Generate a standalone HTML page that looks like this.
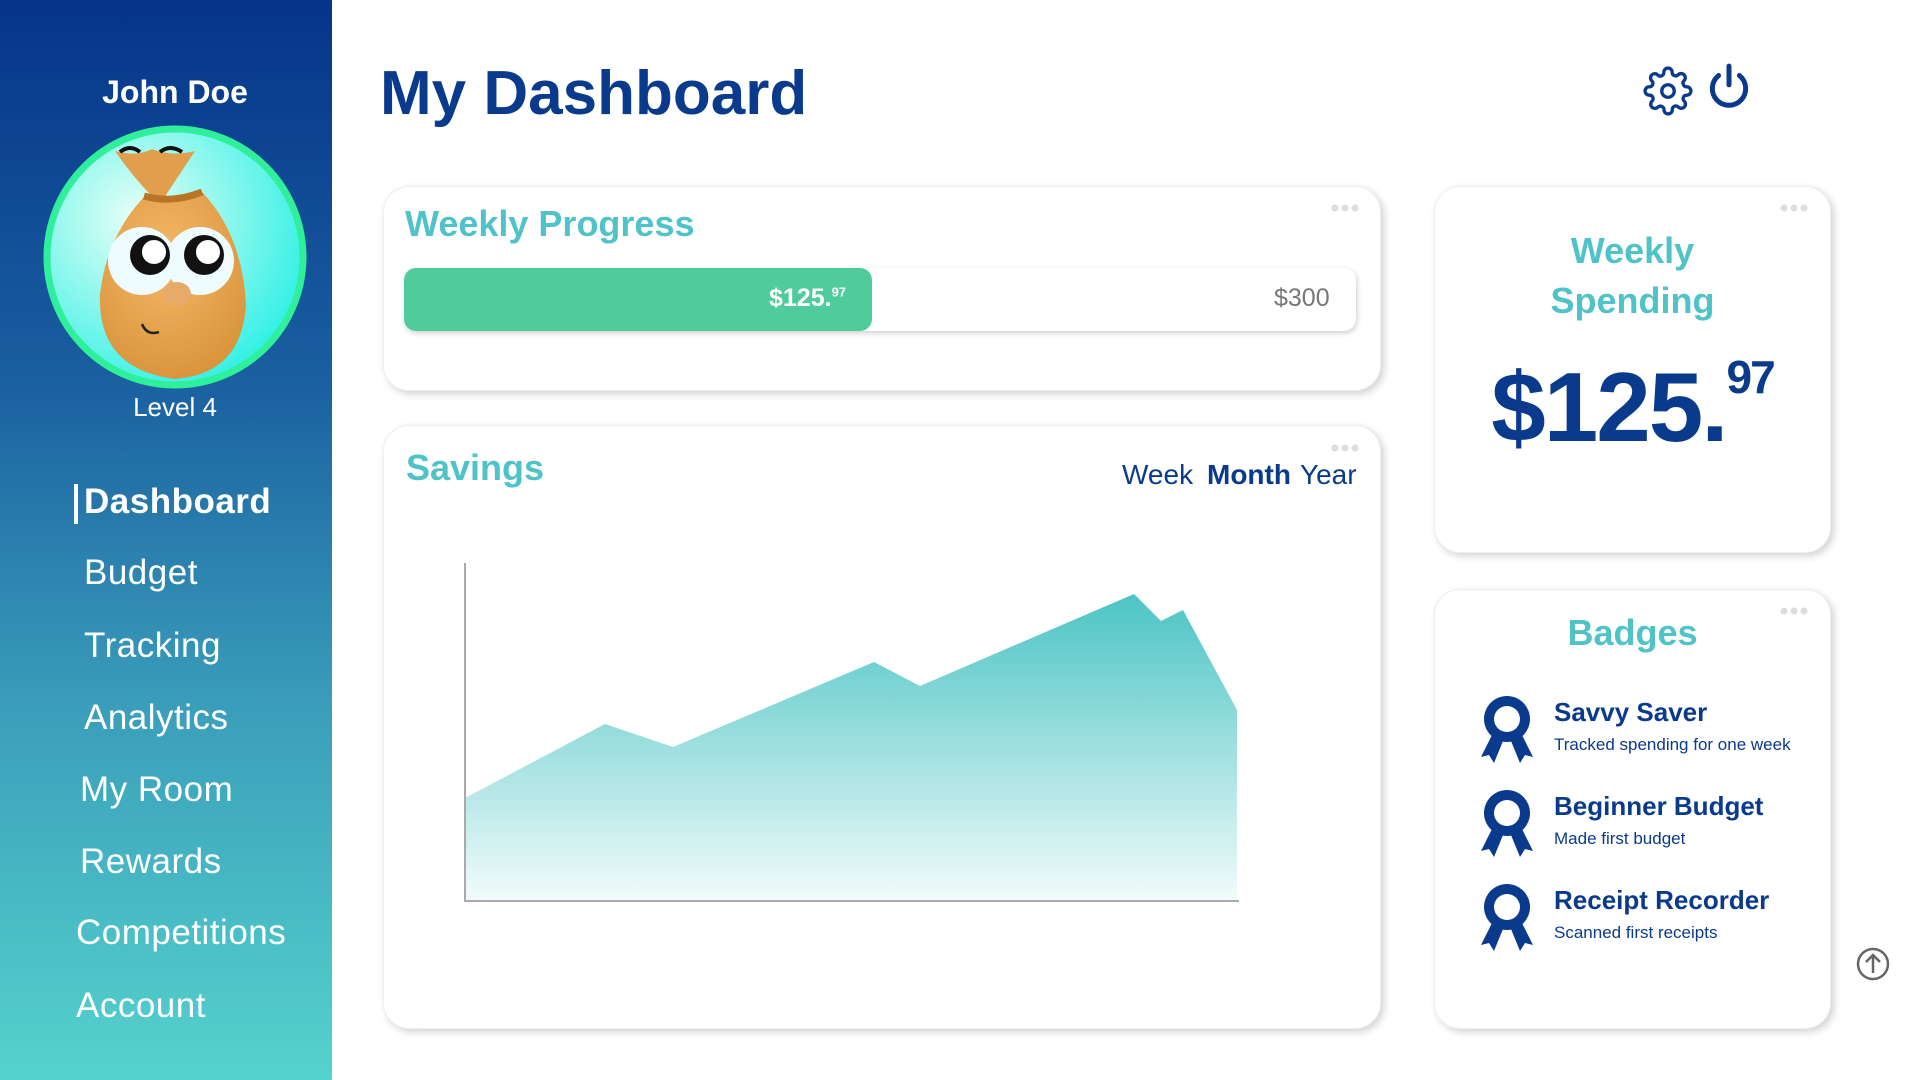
<!DOCTYPE html>
<html><head><meta charset="utf-8"><style>
*{margin:0;padding:0;box-sizing:border-box}
body{width:1920px;height:1080px;position:relative;background:#fff;font-family:"Liberation Sans",sans-serif;overflow:hidden}
.side{position:absolute;left:0;top:0;width:332px;height:1080px;background:linear-gradient(180deg,#05348a 0%,#1a5fa0 35%,#3a9dba 65%,#55d3cd 100%)}
.name{position:absolute;left:0;width:350px;text-align:center;top:74px;color:#fff;font-weight:bold;font-size:32px}
.lvl{position:absolute;left:0;width:350px;text-align:center;top:392px;color:#fff;font-size:26px}
.nav{position:absolute;color:#fff;font-size:35px;letter-spacing:.5px}
.card{position:absolute;background:#fff;border-radius:26px;box-shadow:3px 3px 8px rgba(0,0,0,.18);border:1px solid #eee}
.dots{position:absolute;width:28px;height:8px}
.tt{position:absolute;color:#4fc3c8;font-weight:bold;font-size:36px}
.bt{position:absolute;left:1554px;color:#0a3a8c;font-weight:bold;font-size:26px}
.bs{position:absolute;left:1554px;color:#0a3a8c;font-size:17px}
</style></head><body>
<svg width="0" height="0" style="position:absolute"><defs><g id="dt"><circle cx="4" cy="4" r="3.5" fill="#ddd"/><circle cx="14" cy="4" r="3.5" fill="#ddd"/><circle cx="24" cy="4" r="3.5" fill="#ddd"/></g>
<g id="rib"><path d="M-14 14 L-26 38 L-18 36 L-13 44 L-4 22Z M14 14 L26 38 L18 36 L13 44 L4 22Z" fill="#0a3a8c"/><circle cx="0" cy="0" r="23" fill="#0a3a8c"/><circle cx="0" cy="0" r="13" fill="#fff"/></g></defs></svg>
<div class="side">
<div class="name">John Doe</div>
<svg style="position:absolute;left:42px;top:124px" width="266" height="266" viewBox="0 0 266 266">
<defs><radialGradient id="bg" cx=".35" cy=".35" r=".7"><stop offset="0" stop-color="#e8fff6"/><stop offset="1" stop-color="#35f0e6"/></radialGradient>
<radialGradient id="bag" cx=".45" cy=".35" r=".7"><stop offset="0" stop-color="#f5b868"/><stop offset="1" stop-color="#d8933a"/></radialGradient></defs>
<circle cx="133" cy="133" r="128" fill="url(#bg)" stroke="#2fef9a" stroke-width="7"/>
<path d="M73 27 Q95 33 110 25 Q130 33 153 27 L118 80 Q96 60 73 27Z" fill="#e19f4e"/>
<path d="M78 28 Q88 20 98 28 M118 28 Q128 20 140 28" stroke="#111" stroke-width="4" fill="none"/>
<path d="M105 70 Q65 110 58 170 Q55 245 133 255 Q200 250 204 180 Q200 110 160 68 Q130 80 105 70Z" fill="url(#bag)"/>
<path d="M102 72 Q130 80 160 68" stroke="#b97425" stroke-width="7" fill="none"/>
<ellipse cx="100" cy="137" rx="34" ry="34" fill="#eefcff"/><ellipse cx="158" cy="137" rx="34" ry="34" fill="#eefcff"/>
<circle cx="108" cy="131" r="20" fill="#111"/><circle cx="162" cy="131" r="20" fill="#111"/>
<circle cx="112" cy="128" r="12" fill="#fff"/><circle cx="166" cy="128" r="12" fill="#fff"/>
<ellipse cx="135" cy="170" rx="14" ry="12" fill="#e8aa6a"/>
<path d="M100 200 Q105 212 117 208" stroke="#222" stroke-width="2.5" fill="none"/>
</svg>
<div class="lvl">Level 4</div>
<div style="position:absolute;left:74px;top:484px;width:4px;height:40px;background:#fff"></div>
<div class="nav" style="left:84px;top:482px;font-weight:bold">Dashboard</div>
<div class="nav" style="left:84px;top:553px">Budget</div>
<div class="nav" style="left:84px;top:626px">Tracking</div>
<div class="nav" style="left:84px;top:698px">Analytics</div>
<div class="nav" style="left:80px;top:770px">My Room</div>
<div class="nav" style="left:80px;top:842px">Rewards</div>
<div class="nav" style="left:76px;top:913px">Competitions</div>
<div class="nav" style="left:76px;top:986px">Account</div>
</div>

<div style="position:absolute;left:380px;top:58px;color:#0a3a8c;font-weight:bold;font-size:62px">My Dashboard</div>
<svg style="position:absolute;left:1643px;top:66px" width="50" height="50" viewBox="0 0 24 24" fill="none" stroke="#0a3a8c" stroke-width="1.6"><circle cx="12" cy="12" r="3"/><path d="M19.4 15a1.65 1.65 0 0 0 .33 1.82l.06.06a2 2 0 1 1-2.83 2.83l-.06-.06a1.650 1.65 0 0 0-1.82-.33 1.65 1.65 0 0 0-1 1.51V21a2 2 0 1 1-4 0v-.09A1.65 1.65 0 0 0 9 19.4a1.65 1.65 0 0 0-1.820.33l-.06.06a2 2 0 1 1-2.83-2.83l.06-.06A1.65 1.65 0 0 0 4.68 15a1.65 1.65 0 0 0-1.51-1H3a2 2 0 1 1 0-4h.09A1.65 1.65 0 0 0 4.6 9a1.65 1.65 0 0 0-.33-1.82l-.06-.06a2 2 0 1 1 2.83-2.83l.06.06A1.65 1.65 0 0 0 9 4.68 1.65 1.65 0 0 0 10 3.17V3a2 2 0 1 1 4 0v.09a1.65 1.65 0 0 0 1 1.51 1.65 1.65 0 0 0 1.82-.33l.06-.06a2 2 0 1 1 2.830 2.83l-.06.06A1.65 1.65 0 0 0 19.4 9a1.65 1.65 0 0 0 1.51 1H21a2 2 0 1 1 0 4h-.09a1.65 1.65 0 0 0-1.51 1z"/></svg>
<svg style="position:absolute;left:1704px;top:62px" width="50" height="50" viewBox="0 0 24 24" fill="none" stroke="#0a3a8c" stroke-width="2.4" stroke-linecap="round"><path d="M7 6.5a8 8 0 1 0 10 0"/><path d="M12 2v9"/></svg>

<div class="card" style="left:383px;top:186px;width:998px;height:205px"></div>
<svg class="dots" style="left:1331px;top:204px"><use href="#dt"/></svg>
<div class="tt" style="left:405px;top:203px">Weekly Progress</div>
<div style="position:absolute;left:404px;top:268px;width:952px;height:63px;border-radius:12px;background:#fff;box-shadow:1px 2px 6px rgba(0,0,0,.2)"></div>
<div style="position:absolute;left:404px;top:268px;width:468px;height:63px;border-radius:12px;background:#4fcb9c"></div>
<div style="position:absolute;left:769px;top:284px;color:#fff;font-weight:bold;font-size:25px">$125.<sup style="font-size:13px">97</sup></div>
<div style="position:absolute;left:1274px;top:284px;color:#777;font-size:25px">$300</div>

<div class="card" style="left:383px;top:425px;width:998px;height:604px"></div>
<svg class="dots" style="left:1331px;top:444px"><use href="#dt"/></svg>
<div class="tt" style="left:406px;top:447px">Savings</div>
<div style="position:absolute;left:1122px;top:459px;color:#0a3a8c;font-size:28px">Week</div>
<div style="position:absolute;left:1207px;top:459px;color:#0a3a8c;font-size:28px;font-weight:bold">Month</div>
<div style="position:absolute;left:1300px;top:459px;color:#0a3a8c;font-size:28px">Year</div>
<svg style="position:absolute;left:0;top:0" width="1920" height="1080">
<defs><linearGradient id="ch" x1="0" y1="0" x2="0" y2="1"><stop offset="0" stop-color="#4cc4c4"/><stop offset="1" stop-color="#f2fbfb"/></linearGradient></defs>
<polygon points="465,798 605,724 673,747 874,662 920,686 1134,594 1161,621 1183,610 1237,710 1237,901 465,901" fill="url(#ch)"/>
<path d="M465 563 V901 H1239" stroke="#aaa" stroke-width="2" fill="none"/>
</svg>

<div class="card" style="left:1434px;top:186px;width:397px;height:367px"></div>
<svg class="dots" style="left:1780px;top:204px"><use href="#dt"/></svg>
<div class="tt" style="left:1434px;width:397px;text-align:center;top:226px;line-height:50px">Weekly<br>Spending</div>
<div style="position:absolute;left:1434px;width:397px;text-align:center;top:350px;color:#0a3a8c;font-weight:bold;font-size:98px;letter-spacing:-2px">$125.<sup style="font-size:46px;vertical-align:48px">97</sup></div>

<div class="card" style="left:1434px;top:589px;width:397px;height:440px"></div>
<svg class="dots" style="left:1780px;top:607px"><use href="#dt"/></svg>
<div class="tt" style="left:1434px;width:397px;text-align:center;top:612px">Badges</div>
<svg style="position:absolute;left:0;top:0" width="1920" height="1080"><use href="#rib" x="1507" y="719"/><use href="#rib" x="1507" y="813"/><use href="#rib" x="1507" y="907"/></svg>
<div class="bt" style="top:697px">Savvy Saver</div><div class="bs" style="top:735px">Tracked spending for one week</div>
<div class="bt" style="top:791px">Beginner Budget</div><div class="bs" style="top:829px">Made first budget</div>
<div class="bt" style="top:885px">Receipt Recorder</div><div class="bs" style="top:923px">Scanned first receipts</div>
<svg style="position:absolute;left:1856px;top:947px" width="34" height="34" viewBox="0 0 34 34" fill="none" stroke="#666" stroke-width="2.5"><circle cx="17" cy="17" r="15"/><path d="M17 26V9M10 15l7-7 7 7"/></svg>
</body></html>
